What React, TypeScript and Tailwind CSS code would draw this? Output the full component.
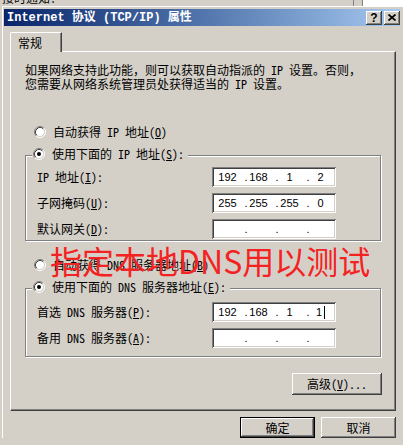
import { Fragment } from 'react';

const raised =
  'shadow-[inset_-1px_-1px_0_#404040,inset_1px_1px_0_#ffffff,inset_-2px_-2px_0_#808080,inset_2px_2px_0_#d4d0c8]';

const Radio = ({ checked = false }: { checked?: boolean }) => (
  <svg width="12" height="12" viewBox="0 0 12 12" className="shrink-0">
    <circle cx="6" cy="6" r="4.5" fill="#ffffff" />
    <path d="M2.11 9.89A5.5 5.5 0 0 1 9.89 2.11" stroke="#808080" fill="none" />
    <path d="M9.89 2.11A5.5 5.5 0 0 1 2.11 9.89" stroke="#ffffff" fill="none" />
    <path d="M2.82 9.18A4.5 4.5 0 0 1 9.18 2.82" stroke="#404040" fill="none" />
    <path d="M9.18 2.82A4.5 4.5 0 0 1 2.82 9.18" stroke="#d4d0c8" fill="none" />
    {checked && <circle cx="6" cy="6" r="2" fill="#000000" />}
  </svg>
);

const Key = ({ k }: { k: string }) => (
  <>
    (<span className="underline underline-offset-1">{k}</span>)
  </>
);

const IpBox = ({ parts, caret = false }: { parts: string[]; caret?: boolean }) => (
  <div className="flex h-[20px] w-[124px] items-center overflow-hidden bg-white pl-[4px] font-['Liberation_Sans',sans-serif] text-[11px] text-black shadow-[inset_1px_1px_0_#808080,inset_-1px_-1px_0_#ffffff,inset_2px_2px_0_#404040,inset_-2px_-2px_0_#d4d0c8]">
    {parts.map((p, i) => (
      <Fragment key={i}>
        {i > 0 && <span className="flex w-[2px] shrink-0 justify-center">.</span>}
        <span className="flex w-[29px] shrink-0 items-center justify-center pr-[6px]">
          {p}
          {caret && i === 3 && <span className="ml-[2px] inline-block h-[13px] w-px bg-black" />}
        </span>
      </Fragment>
    ))}
  </div>
);

const Row = ({ label, parts, caret }: { label: React.ReactNode; parts: string[]; caret?: boolean }) => (
  <div className="flex h-[20px] items-center">
    <span className="w-[175px]">{label}</span>
    <IpBox parts={parts} caret={caret} />
  </div>
);

export default function App() {
  return (
    <div className="relative h-[445px] w-[403px] overflow-hidden bg-[#d4d0c8] font-['Noto_Sans_Mono_CJK_SC','Noto_Sans_CJK_SC',sans-serif] text-[12px] leading-[14px] text-black">
      {/* window behind */}
      <div className="flex h-[6px] overflow-hidden">
        <div className="flex-1 overflow-hidden">
          <div className="-mt-[9px] whitespace-nowrap pl-[2px]">接时通知：</div>
        </div>
        <div className="w-px bg-[#808080]" />
        <div className="w-[8px]" />
        <div className="w-px bg-[#808080]" />
        <div className="w-[40px] bg-white" />
      </div>

      <div className="ml-[2px] flex flex-col border-l border-t border-white pl-[1px] pr-[3px] pt-[2px]">
        {/* Title bar */}
        <div className="flex h-[17px] items-center justify-between bg-linear-to-r from-[#0a246a] to-[#a6caf0] pl-[3px]">
          <span className="font-['Liberation_Mono','Noto_Sans_CJK_SC',monospace] text-[12px] font-bold text-white">
            Internet 协议 (TCP/IP) 属性
          </span>
          <div className="flex gap-[2px]">
            <div className={`flex h-[14px] w-[16px] items-center justify-center bg-[#d4d0c8] font-['Liberation_Sans',sans-serif] text-[12px] font-bold leading-none ${raised}`}>
              ?
            </div>
            <div className={`flex h-[14px] w-[16px] items-center justify-center bg-[#d4d0c8] ${raised}`}>
              <svg width="8" height="7" viewBox="0 0 8 7">
                <path d="M0.5 0.5L7.5 6.5M7.5 0.5L0.5 6.5" stroke="#000" strokeWidth="1.7" />
              </svg>
            </div>
          </div>
        </div>

        <div className="pl-[6px] pr-[4px]">
          {/* Tab */}
          <div className="mt-[6px] flex">
            <div className="relative z-10 -mb-px flex h-[20px] w-[52px] items-center rounded-tl-[2px] border-l border-r border-t border-white border-r-[#404040] bg-[#d4d0c8] pl-[7px] shadow-[inset_-1px_0_0_#808080]">
              常规
            </div>
          </div>

          {/* Panel */}
          <div className="flex h-[360px] flex-col border border-white border-b-[#404040] border-r-[#404040] shadow-[inset_-1px_-1px_0_#808080]">
            <p className="pl-[14px] pt-[11px]">
              如果网络支持此功能，则可以获取自动指派的 IP 设置。否则，
              <br />
              您需要从网络系统管理员处获得适当的 IP 设置。
            </p>

            <div className="mt-[33px] flex h-[16px] items-center gap-[7px] pl-[23px]">
              <Radio />
              <span>
                自动获得 IP 地址<Key k="O" />
              </span>
            </div>

            <div className="ml-[14px] mt-[15px] w-[356px] border border-[#808080] shadow-[inset_1px_1px_0_#ffffff,1px_1px_0_#ffffff]">
              <div className="-mt-[10px] ml-[6px] flex h-[16px] w-fit items-center gap-[7px] bg-[#d4d0c8] pl-px pr-[4px]">
                <Radio checked />
                <span>
                  使用下面的 IP 地址<Key k="S" />:
                </span>
              </div>
              <div className="mt-[5px] flex flex-col gap-[6px] pb-px pl-[11px]">
                <Row label={<>IP 地址<Key k="I" />:</>} parts={['192', '168', '1', '2']} />
                <Row label={<>子网掩码<Key k="U" />:</>} parts={['255', '255', '255', '0']} />
                <Row label={<>默认网关<Key k="D" />:</>} parts={['', '', '', '']} />
              </div>
            </div>

            <div className="mt-[16px] flex h-[16px] items-center gap-[7px] pl-[23px]">
              <Radio />
              <span>
                自动获得 DNS 服务器地址<Key k="B" />
              </span>
            </div>

            <div className="ml-[14px] mt-[15px] w-[356px] border border-[#808080] shadow-[inset_1px_1px_0_#ffffff,1px_1px_0_#ffffff]">
              <div className="-mt-[10px] ml-[6px] flex h-[16px] w-fit items-center gap-[7px] bg-[#d4d0c8] pl-px pr-[4px]">
                <Radio checked />
                <span>
                  使用下面的 DNS 服务器地址<Key k="E" />:
                </span>
              </div>
              <div className="mt-[7px] flex flex-col gap-[6px] pb-[8px] pl-[11px]">
                <Row label={<>首选 DNS 服务器<Key k="P" />:</>} parts={['192', '168', '1', '1']} caret />
                <Row label={<>备用 DNS 服务器<Key k="A" />:</>} parts={['', '', '', '']} />
              </div>
            </div>

            <div className="mt-[16px] flex justify-end pr-[13px]">
              <button className={`flex h-[22px] w-[90px] items-center justify-center bg-[#d4d0c8] ${raised}`}>
                高级<Key k="V" />...
              </button>
            </div>
          </div>

          {/* Dialog buttons */}
          <div className="mt-[6px] flex justify-end gap-[6px]">
            <button className="h-[21px] w-[75px] border border-black bg-[#d4d0c8] shadow-[inset_-1px_-1px_0_#404040,inset_1px_1px_0_#ffffff,inset_-2px_-2px_0_#808080]">
              确定
            </button>
            <button className={`h-[21px] w-[75px] bg-[#d4d0c8] ${raised}`}>取消</button>
          </div>
        </div>
      </div>

      {/* annotation */}
      <div className="absolute left-[50px] top-[244px] whitespace-nowrap font-['Noto_Sans_CJK_SC',sans-serif] text-[32px] leading-none text-[#f42323]">
        指定本地DNS用以测试
      </div>
    </div>
  );
}
